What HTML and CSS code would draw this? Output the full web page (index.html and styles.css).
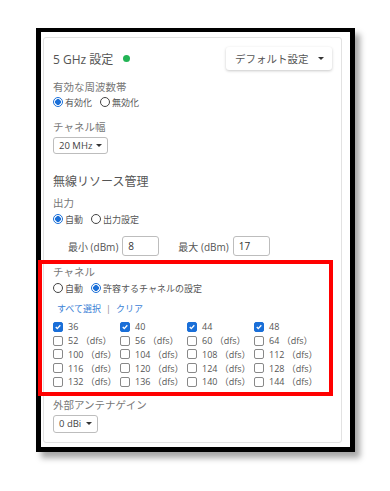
FILE: index.html
```html
<!DOCTYPE html>
<html lang="ja">
<head>
<meta charset="UTF-8" />
<meta name="viewport" content="width=device-width, initial-scale=1" />
<title>5 GHz 設定</title>
<link rel="stylesheet" href="styles.css">
</head>
<body>
  <div class="frame">
    <div class="card">
      <div class="card-head">
        <div class="title">5 GHz 設定 <span class="dot"></span></div>
        <button class="menu-btn" type="button">デフォルト設定 <span class="caret"></span></button>
      </div>

      <div class="label first">有効な周波数帯</div>
      <div class="radios">
        <span class="opt"><span class="radio on"></span>有効化</span>
        <span class="opt"><span class="radio"></span>無効化</span>
      </div>

      <div class="label sec">チャネル幅</div>
      <div class="select w-mhz">20 MHz <span class="caret"></span></div>

      <div class="heading">無線リソース管理</div>
      <div class="label sub">出力</div>
      <div class="radios">
        <span class="opt"><span class="radio on"></span>自動</span>
        <span class="opt"><span class="radio"></span>出力設定</span>
      </div>
      <div class="range">
        <span class="range-label">最小 (dBm)</span>
        <input class="num" type="text" value="8" />
        <span class="range-label gap">最大 (dBm)</span>
        <input class="num" type="text" value="17" />
      </div>

      <div class="label chan">チャネル</div>
      <div class="radios">
        <span class="opt"><span class="radio"></span>自動</span>
        <span class="opt"><span class="radio on"></span>許容するチャネルの設定</span>
      </div>
      <div class="links"><a href="#">すべて選択</a><span class="sep">|</span><a href="#">クリア</a></div>

      <div class="chk-grid">
        <span class="chk"><span class="box on"><svg viewBox="0 0 10 10"><path d="M2.2 5.1l1.9 1.9 3.8-4.1" /></svg></span>36</span>
        <span class="chk"><span class="box on"><svg viewBox="0 0 10 10"><path d="M2.2 5.1l1.9 1.9 3.8-4.1" /></svg></span>40</span>
        <span class="chk"><span class="box on"><svg viewBox="0 0 10 10"><path d="M2.2 5.1l1.9 1.9 3.8-4.1" /></svg></span>44</span>
        <span class="chk"><span class="box on"><svg viewBox="0 0 10 10"><path d="M2.2 5.1l1.9 1.9 3.8-4.1" /></svg></span>48</span>
        <span class="chk"><span class="box"></span>52 （dfs）</span>
        <span class="chk"><span class="box"></span>56 （dfs）</span>
        <span class="chk"><span class="box"></span>60 （dfs）</span>
        <span class="chk"><span class="box"></span>64 （dfs）</span>
        <span class="chk"><span class="box"></span>100 （dfs）</span>
        <span class="chk"><span class="box"></span>104 （dfs）</span>
        <span class="chk"><span class="box"></span>108 （dfs）</span>
        <span class="chk"><span class="box"></span>112 （dfs）</span>
        <span class="chk"><span class="box"></span>116 （dfs）</span>
        <span class="chk"><span class="box"></span>120 （dfs）</span>
        <span class="chk"><span class="box"></span>124 （dfs）</span>
        <span class="chk"><span class="box"></span>128 （dfs）</span>
        <span class="chk"><span class="box"></span>132 （dfs）</span>
        <span class="chk"><span class="box"></span>136 （dfs）</span>
        <span class="chk"><span class="box"></span>140 （dfs）</span>
        <span class="chk"><span class="box"></span>144 （dfs）</span>
      </div>

      <div class="label ant">外部アンテナゲイン</div>
      <div class="select w-dbi">0 dBi <span class="caret"></span></div>
    </div>
  </div>

  <!-- annotation box drawn over the channel block -->
  <div class="highlight"></div>
</body>
</html>
```

FILE: styles.css
```css
:root {
  --text-head: #555;
  --text-label: #777;
  --text-body: #555;
  --blue: #1a6fd8;
  --link: #3b82d6;
  --border: #bdbdbd;
}

html, body {
  margin: 0;
  padding: 0;
}

body {
  position: relative;
  width: 390px;
  height: 491px;
  overflow: hidden;
  background: #fff;
  font-family: "Open Sans", "Noto Sans CJK JP", sans-serif;
  color: var(--text-body);
}

.frame {
  margin: 28px 0 0 36px;
  width: 304px;
  border: 5px solid #000;
  border-top-width: 4px;
  padding: 5px 3px 4px 2px;
  background: #fff;
  box-shadow: 5px 6px 6px rgba(0, 0, 0, 0.35);
}

.card {
  box-sizing: border-box;
  width: 299px;
  border: 1px solid #e2e2e2;
  border-radius: 3px;
  padding: 9px 9px 9px 9px;
}

.card-head {
  display: flex;
  justify-content: space-between;
  align-items: center;
  height: 23px;
}

.title {
  display: flex;
  align-items: center;
  font-size: 12px;
  color: var(--text-head);
  white-space: pre;
}

.dot {
  width: 7px;
  height: 7px;
  margin-left: 7px;
  border-radius: 50%;
  background: #22b455;
}

.menu-btn {
  display: flex;
  align-items: center;
  box-sizing: border-box;
  width: 106px;
  height: 23px;
  padding: 0 8px 0 9px;
  border: none;
  border-radius: 3px;
  background: #fff;
  box-shadow: 0 1px 3px rgba(0, 0, 0, 0.22);
  font-family: inherit;
  font-size: 10.5px;
  color: var(--text-head);
}

.menu-btn .caret {
  margin-left: auto;
}

.caret {
  flex: none;
  width: 0;
  height: 0;
  border-left: 3px solid transparent;
  border-right: 3px solid transparent;
  border-top: 3.5px solid #333;
}

.label {
  font-size: 10.5px;
  line-height: 14px;
  color: var(--text-label);
}

.label.first { margin-top: 10px; }
.label.sec { margin-top: 11px; }
.label.sub { margin-top: 6px; }
.label.chan { margin-top: 9px; }
.label.ant { margin-top: 9px; }

.heading {
  margin-top: 20px;
  font-size: 12px;
  line-height: 16px;
  color: var(--text-head);
}

.radios {
  display: flex;
  align-items: center;
  height: 14px;
  margin-top: 1px;
  gap: 8px;
  font-size: 9px;
  color: var(--text-body);
}

.label.sub + .radios,
.label.chan + .radios {
  margin-top: 2px;
}

.opt {
  display: flex;
  align-items: center;
  gap: 2px;
}

.radio {
  box-sizing: border-box;
  width: 10px;
  height: 10px;
  border: 1px solid #444;
  border-radius: 50%;
  background: #fff;
}

.radio.on {
  border-color: var(--blue);
  background: radial-gradient(circle, var(--blue) 0 2.6px, #fff 3.1px);
}

.select {
  display: flex;
  align-items: center;
  box-sizing: border-box;
  margin-top: 3px;
  padding: 0 5px 0 5px;
  border: 1px solid var(--border);
  border-radius: 3px;
  background: #fff;
  font-size: 9.5px;
  color: #444;
  white-space: nowrap;
}

.select .caret {
  margin-left: auto;
}

.w-mhz {
  width: 55px;
  height: 17px;
}

.w-dbi {
  width: 45px;
  height: 18px;
}

.range {
  display: flex;
  align-items: center;
  height: 20px;
  margin-top: 10px;
  padding-left: 15px;
}

.range-label {
  font-size: 10px;
  color: var(--text-body);
  margin-right: 4px;
}

.range-label.gap {
  margin-left: 19px;
}

.num {
  box-sizing: border-box;
  width: 37px;
  height: 20px;
  padding: 0 0 0 5px;
  border: 1px solid var(--border);
  border-radius: 3px;
  font-family: inherit;
  font-size: 10px;
  color: #333;
}

.links {
  margin-top: 7px;
  padding-left: 4px;
  font-size: 9px;
  line-height: 14px;
}

.links a {
  color: var(--link);
  text-decoration: none;
}

.links .sep {
  margin: 0 5px;
  color: #888;
}

.chk-grid {
  display: grid;
  grid-template-columns: repeat(4, 67px);
  grid-auto-rows: 13.75px;
  margin-top: 4px;
}

.chk {
  display: flex;
  align-items: center;
  font-size: 9px;
  color: var(--text-body);
  white-space: nowrap;
}

.box {
  box-sizing: border-box;
  width: 10px;
  height: 10px;
  margin-right: 5px;
  border: 1px solid #888;
  border-radius: 2px;
  background: #fff;
}

.box.on {
  border-color: var(--blue);
  background: var(--blue);
}

.box svg {
  display: block;
  width: 8px;
  height: 8px;
}

.box svg path {
  fill: none;
  stroke: #fff;
  stroke-width: 1.7;
}

.highlight {
  position: absolute;
  left: 38px;
  top: 260px;
  width: 295px;
  height: 136px;
  box-sizing: border-box;
  border: 4px solid #f00;
}
```
